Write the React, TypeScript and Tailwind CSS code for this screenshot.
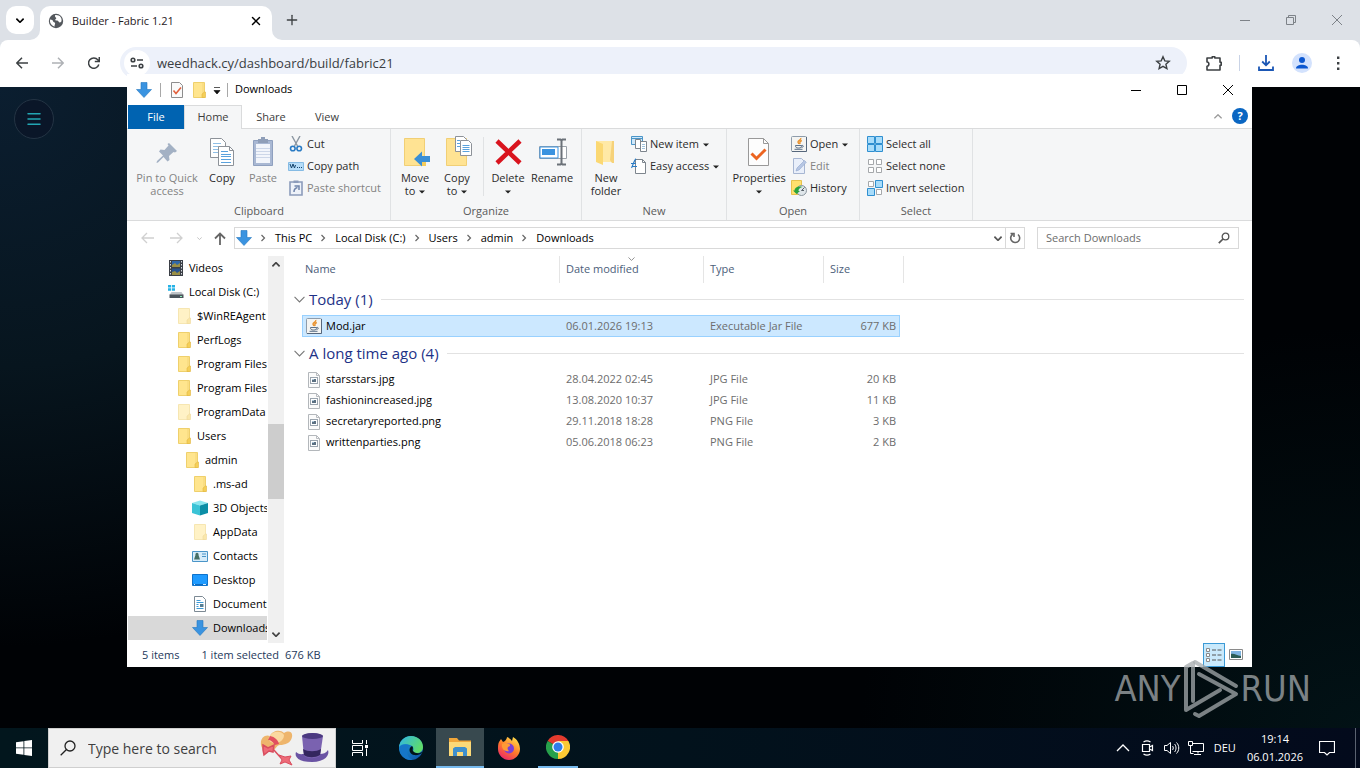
import { ReactNode } from "react";
import clsx from "clsx";
import { X, Plus, Menu } from "lucide-react";

type IconProps = { className?: string };

/* ---------- small shared icons ---------- */

const Chevron = ({
  className,
  up,
  weight = 1.2,
}: {
  className: string;
  up?: boolean;
  weight?: number;
}) => (
  <svg viewBox="0 0 10 6" className={className}>
    <path
      d={up ? "M.5 5.300 5 .8l4.500 4.500" : "M.5 .7 5 5.200 9.500 .7"}
      fill="none"
      stroke="currentColor"
      strokeWidth={weight}
    />
  </svg>
);

const DownArrow = ({ className = "size-4" }: IconProps) => (
  <svg viewBox="0 0 16 16" className={className}>
    <path
      d="M5 .5h6v7h4.500L8 15.500.5 7.500H5z"
      fill="#3a93e0"
      stroke="#2477c0"
      strokeWidth=".6"
    />
  </svg>
);

const Folder = ({ className = "size-4" }: IconProps) => (
  <svg viewBox="0 0 16 16" className={className}>
    <path d="M2.500 .5h11v15h-11z" fill="#ffe58e" stroke="#efd06c" />
    <path d="M12 1v10" stroke="#f5d679" />
    <path d="M13.500 10h1v5.500h-3.500v-3.500z" fill="#f5cf58" stroke="#e0b53f" strokeWidth=".6" />
  </svg>
);

const FolderLight = () => (
  <svg viewBox="0 0 16 16" className="size-4">
    <path d="M2.500 .5h11v15h-11z" fill="#fff2c6" stroke="#f6e6b2" />
    <path d="M13.500 10h1v5.500h-3.500v-3.500z" fill="#fae7ab" stroke="#efd99c" strokeWidth=".6" />
  </svg>
);

const JavaIcon = () => (
  <svg viewBox="0 0 16 16" className="size-4">
    <rect x=".5" y=".5" width="15" height="15" rx="1" fill="#f4f4f2" stroke="#8e9cab" />
    <path d="M1 15.500h14.500V1" fill="none" stroke="#56677c" />
    <path
      d="M9.800 2C10.500 4 6.500 4.600 7 6.200c.2.800 1 1 .8 2M10.800 4.500c-1.800.8-2.500 1.800-1.500 3.300"
      fill="none"
      stroke="#e8912d"
      strokeWidth="1.400"
    />
    <path
      d="M4.500 9.500h6c0 2-.8 2.500-3 2.500s-3-.5-3-2.500zM10.500 9.500c2.500-.5 2.500 1.500 0 2M3.500 13.300h8"
      fill="none"
      stroke="#5b7088"
    />
  </svg>
);

const ImageFile = () => (
  <svg viewBox="0 0 16 16" className="size-4">
    <path d="M2.500 .5h8l3 3v12h-11z" fill="#fbfbfb" stroke="#b3b7bb" />
    <path d="M10.500 .5v3h3" fill="none" stroke="#b9bcc0" />
    <rect x="4.500" y="5.500" width="7" height="6" fill="#fff" stroke="#9aa4ae" />
    <path d="M6 7h4v3H6z" fill="#5b7082" />
    <path d="M6 7h2v1H6z" fill="#a9c3d6" />
  </svg>
);

const Videos = () => (
  <svg viewBox="0 0 16 16" className="size-4">
    <path d="M1 0h14v16H1z" fill="#3b3f46" />
    <path d="M4 1h8v6H4z" fill="#2f67a8" />
    <path d="M4 8.500h8V15H4z" fill="#27538e" />
    <path d="m4 5 3-2 2 2 3-2v4H4zM4 12l3-1 2 2 3-2v4H4z" fill="#9a8f45" />
    <path d="M2.500 1v15M13.500 1v15" stroke="#d5dae0" strokeDasharray="1.500 1.500" />
  </svg>
);

const Disk = () => (
  <svg viewBox="0 0 16 16" className="size-4">
    <path d="M0 1h3v2.500H0zM3.800 1H7v2.500H3.800zM0 4.300h3v2.500H0zM3.800 4.300H7v2.500H3.800z" fill="#25b2e6" />
    <path d="m3.500 8-2 3h14l-2-3z" fill="#bfc4c9" />
    <path d="M1.500 10.500h14v3.500h-14z" fill="#4c545c" />
    <path d="M12 12h2v1h-2z" fill="#8df0b8" />
  </svg>
);

const Cube = () => (
  <svg viewBox="0 0 16 16" className="size-4">
    <path d="M8 .5 16 3 8 5.500 0 3z" fill="#8be6ef" />
    <path d="M0 3l8 2.500v10L0 13z" fill="#3ac3d6" />
    <path d="M16 3 8 5.500v10L16 13z" fill="#0b8ea6" />
  </svg>
);

const Contacts = () => (
  <svg viewBox="0 0 16 16" className="size-4">
    <path d="M.5 3.500h15v10H.5z" fill="#d6ecfa" stroke="#4a95c8" />
    <path d="M3.500 7a1.600 1.600 0 1 1 3 0L8 11.500H2z" fill="#466f66" />
    <path d="M10 6h4M10 8.500h4" stroke="#4a95c8" />
  </svg>
);

const DesktopIcon = () => (
  <svg viewBox="0 0 16 16" className="size-4">
    <path d="M.5 2.500h15v11H.5z" fill="#1f9bff" stroke="#0f73cc" />
    <path d="M1 12.500h14" stroke="#0f6cc0" />
    <path d="M2 12.500h1M11 12.500h3" stroke="#d6ecff" />
  </svg>
);

const Documents = () => (
  <svg viewBox="0 0 16 16" className="size-4">
    <path d="M2.500 .5h8l3 3v12h-11z" fill="#fff" stroke="#7d8a94" />
    <path d="M4.500 4.500h4M4.500 6.500h7M4.500 8.500h2M4.500 10.500h2M4.500 12.500h7" stroke="#3f9ad6" />
    <path d="M8 8h3.500v3H8z" fill="#567d92" />
  </svg>
);

/* ---------- browser ---------- */

const BrowserTabs = () => (
  <div className="flex h-10 shrink-0 items-start bg-[#dde1e7] pt-[6px] pl-[6px]">
    <button
      aria-label="Search tabs"
      className="mr-[6px] flex size-7 items-center justify-center rounded-[10px] bg-white"
    >
      <Chevron className="h-[5px] w-2" weight={2} />
    </button>
    <div className="relative flex h-[34px] w-[232px] items-center rounded-t-[10px] bg-white px-2 pb-1">
      <svg viewBox="0 0 10 10" className="absolute bottom-0 -left-2.5 size-2.5">
        <path d="M10 0v10H0A10 10 0 0 0 10 0z" fill="#fff" />
      </svg>
      <svg viewBox="0 0 10 10" className="absolute -right-2.5 bottom-0 size-2.5">
        <path d="M0 0v10h10A10 10 0 0 1 0 0z" fill="#fff" />
      </svg>
      <svg viewBox="0 0 16 16" className="mr-2 size-4">
        <circle cx="8" cy="8" r="7.200" fill="#54585d" />
        <path
          d="M2 6.500c2 .2 3 .8 3.200 2 .2 1 1.600.6 1.900 1.700.2 1-.9 1.600-.4 3.300C4 13 1.500 10.500 2 6.500zM7 2c.5 1-.4 1.800.5 2.300 1 .5 1 1.500 0 2-.6.4-.3 1.300.6 1.200 1.600-.2 2.200.6 2.900 1.400.8.9 1.800.6 2.400-.3C14.500 4.500 11.500 1.500 7 2z"
          fill="#fff"
        />
      </svg>
      <span className="flex-1 text-[11px] text-[#1f2023]">Builder - Fabric 1.21</span>
      <button aria-label="Close tab" className="mr-[1px]">
        <X className="size-3.5" strokeWidth={2.5} />
      </button>
    </div>
    <button aria-label="New tab" className="mt-[6px] ml-3">
      <Plus className="size-4 text-[#3c4043]" />
    </button>
    <div className="ml-auto flex text-[#7d8288]">
      <button aria-label="Minimize browser" className="flex h-7 w-[46px] items-center justify-center">
        <svg viewBox="0 0 10 10" className="size-2.5">
          <path d="M0 5.500h10" stroke="currentColor" />
        </svg>
      </button>
      <button aria-label="Restore browser" className="flex h-7 w-[46px] items-center justify-center">
        <svg viewBox="0 0 10 10" className="size-2.5">
          <path d="M.5 2.500h7v7h-7zM2.500 2.500v-2h7v7h-2" fill="none" stroke="currentColor" />
        </svg>
      </button>
      <button aria-label="Close browser" className="flex h-7 w-[46px] items-center justify-center">
        <svg viewBox="0 0 10 10" className="size-2.5">
          <path d="m0 0 10 10M10 0 0 10" stroke="currentColor" />
        </svg>
      </button>
    </div>
  </div>
);

const BrowserToolbar = () => (
  <div className="shrink-0 bg-[#dde1e7]">
    <div className="flex h-[47px] items-center rounded-t-[8px] bg-white pr-[14px] pb-px pl-4">
      <button aria-label="Back" className="mr-6">
        <svg viewBox="0 0 12 12" className="size-3 text-[#3c4043]">
          <path d="M12 6H1M6 .8.8 6 6 11.200" fill="none" stroke="currentColor" strokeWidth="1.500" />
        </svg>
      </button>
      <button aria-label="Forward" className="mr-6">
        <svg viewBox="0 0 12 12" className="size-3 text-[#aeb1b5]">
          <path d="M0 6h11M6 .8 11.200 6 6 11.200" fill="none" stroke="currentColor" strokeWidth="1.500" />
        </svg>
      </button>
      <button aria-label="Reload" className="mr-5">
        <svg viewBox="0 0 12 12" className="size-3 text-[#3c4043]">
          <path
            d="M10.800 7.500a5.200 5.200 0 1 1-.9-4.600L11 4.300M11.300 0v4.500H6.800"
            fill="none"
            stroke="currentColor"
            strokeWidth="1.500"
          />
        </svg>
      </button>
      <div className="flex h-8 flex-1 items-center rounded-full bg-[#edf1fa] pr-4 pl-1">
        <span className="mr-[7px] flex size-[26px] items-center justify-center rounded-full bg-white">
          <svg viewBox="0 0 14 12" className="h-3 w-3.5">
            <g fill="none" stroke="#3c4043" strokeWidth="1.600">
              <circle cx="3" cy="3" r="1.800" />
              <circle cx="11" cy="9" r="1.800" />
              <path d="M7 3h6M1 9h6" />
            </g>
          </svg>
        </span>
        <input
          aria-label="Address"
          className="h-6 min-w-0 flex-1 bg-transparent text-[13px] text-[#3a3d42] outline-none"
          defaultValue="weedhack.cy/dashboard/build/fabric21"
        />
        <button aria-label="Bookmark this page">
          <svg viewBox="0 0 16 16" className="size-4">
            <path
              d="m8 1.800 1.800 4.100 4.400.4-3.300 2.900 1 4.400L8 11.300l-3.900 2.300 1-4.400-3.300-2.900 4.400-.4z"
              fill="none"
              stroke="#3c4043"
              strokeWidth="1.400"
            />
          </svg>
        </button>
      </div>
      <button aria-label="Extensions" className="ml-[18px]">
        <svg viewBox="0 0 18 18" className="size-[18px]">
          <path
            d="M2 4h5.200V2.800h2.600V4h5.200v4.200h1.200v3H15V16H2v-3.800c2.500 0 2.500-4.200 0-4.200z"
            fill="none"
            stroke="#3c4043"
            strokeWidth="1.600"
            strokeLinejoin="round"
          />
        </svg>
      </button>
      <div className="mr-[18px] ml-4 h-4 w-px bg-[#c9d3e6]" />
      <button aria-label="Show downloads">
        <svg viewBox="0 0 16 16" className="size-4">
          <path d="M8 0v10M4.200 6.500 8 10.300l3.800-3.800M1 11.500V15h14v-3.500" fill="none" stroke="#1b57b5" strokeWidth="1.800" />
        </svg>
      </button>
      <button aria-label="Profile" className="ml-[18px]">
        <svg viewBox="0 0 20 20" className="size-5">
          <circle cx="10" cy="10" r="10" fill="#d3e2fd" />
          <circle cx="10" cy="7" r="3" fill="#0b57d0" />
          <path d="M4 15.500c0-5 12-5 12 0z" fill="#0b57d0" />
        </svg>
      </button>
      <button aria-label="Browser menu" className="ml-[18px]">
        <svg viewBox="0 0 16 16" className="size-4 text-[#3c4043]">
          <path d="M7 1.500h2.400v2.400H7zM7 7h2.400v2.400H7zM7 12.500h2.400v2.400H7z" fill="currentColor" />
        </svg>
      </button>
    </div>
  </div>
);

/* ---------- explorer ---------- */

const TitleBar = () => (
  <div className="flex h-[31px] shrink-0 items-center pl-[9px]">
    <DownArrow />
    <div className="mx-2 h-3.5 w-px bg-[#a8a8a8]" />
    <svg viewBox="0 0 16 16" className="mr-1.5 size-4">
      <path d="M2.500 .5h8l3 3v12h-11z" fill="#fafafa" stroke="#8d8d8d" />
      <path d="m4.500 8.500 2.500 3 5-6" fill="none" stroke="#e2603c" strokeWidth="1.600" />
    </svg>
    <Folder />
    <button aria-label="Customize toolbar" className="mx-1.5">
      <svg viewBox="0 0 8 8" className="mt-0.5 size-2">
        <path d="M1 .5h6M1 3.500h6L4 7z" fill="#111" stroke="#111" strokeWidth=".7" />
      </svg>
    </button>
    <div className="mr-[7px] h-3.5 w-px bg-[#a8a8a8]" />
    <span>Downloads</span>
    <div className="mr-px ml-auto flex">
      <button aria-label="Minimize" className="flex h-7 w-[46px] items-center justify-center">
        <svg viewBox="0 0 10 10" className="size-2.5">
          <path d="M0 5.500h10" stroke="#000" />
        </svg>
      </button>
      <button aria-label="Maximize" className="flex h-7 w-[46px] items-center justify-center">
        <svg viewBox="0 0 10 10" className="size-2.5">
          <path d="M.5 .5h9v9h-9z" fill="none" stroke="#000" />
        </svg>
      </button>
      <button aria-label="Close" className="flex h-7 w-[46px] items-center justify-center">
        <svg viewBox="0 0 10 10" className="size-2.5">
          <path d="m0 0 10 10M10 0 0 10" stroke="#000" />
        </svg>
      </button>
    </div>
  </div>
);

const RibbonTabs = () => (
  <div className="flex h-6 shrink-0 border-b border-[#dadbdc] text-[#3c3c3c]">
    <button className="ml-px h-6 w-14 bg-[#0063b1] text-white">File</button>
    <button className="h-6 w-[58px] border border-b-0 border-[#dadbdc] bg-[#f5f6f7]">Home</button>
    <button className="h-6 w-[58px]">Share</button>
    <button className="h-6 w-[54px]">View</button>
    <button aria-label="Collapse ribbon" className="mr-2.5 ml-auto">
      <Chevron up className="h-[5px] w-2 text-[#9a9a9a]" weight={1.6} />
    </button>
    <button
      aria-label="Help"
      className="mt-[3px] mr-1 size-4 rounded-full bg-[#0a66c2] text-[11px] leading-4 font-bold text-white"
    >
      ?
    </button>
  </div>
);

const Caret = ({ className = "ml-1" }: IconProps) => (
  <svg viewBox="0 0 6 4" className={clsx("inline-block h-1 w-1.5 align-middle", className)}>
    <path d="M0 .5h6L3 3.500z" fill="#222" />
  </svg>
);

const BigButton = ({
  icon,
  className,
  children,
}: {
  icon: ReactNode;
  className: string;
  children: ReactNode;
}) => (
  <button
    className={clsx(
      "flex shrink-0 flex-col items-center justify-start gap-[3px] pt-[7px] leading-[13px] whitespace-nowrap",
      className,
    )}
  >
    {icon}
    <span className="text-center">{children}</span>
  </button>
);

const SmallButton = ({
  icon,
  disabled,
  caret,
  children,
}: {
  icon: ReactNode;
  disabled?: boolean;
  caret?: boolean;
  children: ReactNode;
}) => (
  <button
    className={clsx(
      "flex h-[22px] items-center gap-[3px] whitespace-nowrap",
      disabled && "text-[#838383]",
    )}
  >
    {icon}
    <span>
      {children}
      {caret && <Caret />}
    </span>
  </button>
);

const RibbonGroup = ({
  label,
  className,
  children,
}: {
  label: string;
  className: string;
  children: ReactNode;
}) => (
  <div className={clsx("flex shrink-0 flex-col border-r border-[#e0e2e4]", className)}>
    <div className="flex flex-1">{children}</div>
    <div className="h-[18px] text-center leading-[18px] text-[#5a5a5a]">{label}</div>
  </div>
);

const Ribbon = () => (
  <div className="flex h-[92px] shrink-0 border-b border-[#dadbdc] bg-[#f5f6f7] pl-px text-[#2b2b2b]">
    <RibbonGroup label="Clipboard" className="w-[263px]">
      <BigButton
        className="w-[78px] text-[#838383]"
        icon={
          <svg viewBox="0 0 32 32" className="size-8">
            <path
              d="m18 7 8 8-2 1.500-1.500-.5-4.500 4 .5 4-2 1.500-4-4.500L7 26.500 5.500 27 6 25l6-5.500-4-4 1.500-2 4 .5 4-4.500L16.500 8z"
              fill="#a3b1c4"
            />
          </svg>
        }
      >
        Pin to Quick
        <br />
        access
      </BigButton>
      <BigButton
        className="w-8"
        icon={
          <svg viewBox="0 0 32 32" className="size-8">
            <path d="M4.500 2.500h11l4 4v15h-15z" fill="#fff" stroke="#8d9299" />
            <path d="M7 7.500h8M7 10.500h9M7 13.500h9M7 16.500h9" stroke="#8fbfe6" />
            <path d="M12.500 10.500h11l4 4v15h-15z" fill="#fff" stroke="#8d9299" />
            <path d="M23.500 10.500v4h4" fill="none" stroke="#8d9299" />
            <path d="M15 15.500h7M15 18.500h10M15 20.500h10M15 23.500h10M15 26.500h10" stroke="#5aa2dd" />
          </svg>
        }
      >
        Copy
      </BigButton>
      <BigButton
        className="w-[50px] text-[#838383]"
        icon={
          <svg viewBox="0 0 32 32" className="size-8">
            <path d="M6.500 4.500h19v25h-19z" fill="#a9b8d3" stroke="#8fa0bf" />
            <path d="M9 8h14v19H9z" fill="#f2f5fb" />
            <path d="M11 3h10v4H11zM14 1h4v3h-4z" fill="#8f9eb8" />
            <path d="M9 12.500h14M9 15.500h14M9 18.500h14M9 21.500h14" stroke="#ccd6e8" />
          </svg>
        }
      >
        Paste
      </BigButton>
      <div className="flex flex-col pt-1">
        <SmallButton
          icon={
            <svg viewBox="0 0 16 16" className="size-4">
              <path d="M4 0l5.500 10M12 0 6.500 10" stroke="#8b96a1" strokeWidth="1.400" />
              <circle cx="4.800" cy="12.500" r="2.300" fill="none" stroke="#2a7bc4" strokeWidth="1.600" />
              <circle cx="11.200" cy="12.500" r="2.300" fill="none" stroke="#2a7bc4" strokeWidth="1.600" />
            </svg>
          }
        >
          Cut
        </SmallButton>
        <SmallButton
          icon={
            <svg viewBox="0 0 16 16" className="size-4">
              <path d="M.5 4.500h15v8H.5z" fill="#b5dcf8" stroke="#85bbe4" />
              <path d="m2 6 1.500 4L5 6l1.500 4L7.500 7" fill="none" stroke="#14436b" />
              <path d="M9 9.500h1M11 9.500h1M13 9.500h1" stroke="#14436b" />
            </svg>
          }
        >
          Copy path
        </SmallButton>
        <SmallButton
          disabled
          icon={
            <svg viewBox="0 0 16 16" className="size-4">
              <path d="M2 2h12v13H2z" fill="#eef2f9" stroke="#8c9cbb" strokeWidth="1.600" />
              <path d="M5.500 .5h5v2.500h-5z" fill="#8c9cbb" />
              <path d="M6 12c0-3 1-4 3.500-4.500M6.500 6H11v4" fill="none" stroke="#6f84ab" strokeWidth="1.500" />
            </svg>
          }
        >
          Paste shortcut
        </SmallButton>
      </div>
    </RibbonGroup>

    <RibbonGroup label="Organize" className="w-[191px]">
      <BigButton
        className="w-12"
        icon={
          <svg viewBox="0 0 32 32" className="size-8">
            <path d="M5.500 2.500h20v27h-20z" fill="#ffe393" stroke="#f1cf75" />
            <path d="M22 25h5v5h-5z" fill="#f5cc5c" />
            <path d="M31 20v6h-8v4.500L15 23l8-7.500V20z" fill="#3a8fd6" />
          </svg>
        }
      >
        Move
        <br />
        to
        <Caret />
      </BigButton>
      <BigButton
        className="w-9"
        icon={
          <svg viewBox="0 0 32 32" className="size-8">
            <path d="M5.500 2.500h20v27h-20z" fill="#ffe393" stroke="#f1cf75" />
            <path d="M14.500 .5h8l3 3v12h-11z" fill="#fff" stroke="#8d9299" />
            <path d="M19.500 4.500h8l3 3v12h-11z" fill="#fff" stroke="#8d9299" />
            <path d="M21.500 9.500h7M21.500 11.500h7M21.500 13.500h7M21.500 15.500h7" stroke="#5aa2dd" />
            <path d="M16 4.500h3M16 7.500h3M16 10.500h3" stroke="#5aa2dd" />
          </svg>
        }
      >
        Copy
        <br />
        to
        <Caret />
      </BigButton>
      <div className="mt-2 mb-1.5 ml-2 w-px bg-[#e0e2e4]" />
      <BigButton
        className="w-12"
        icon={
          <svg viewBox="0 0 32 32" className="size-8">
            <path d="m5 5 23 22M28 5 5 27" stroke="#d9141e" strokeWidth="4.500" />
          </svg>
        }
      >
        Delete
        <br />
        <Caret className="" />
      </BigButton>
      <BigButton
        className="w-10"
        icon={
          <svg viewBox="0 0 32 32" className="size-8">
            <path d="M3.500 10.500h27v12h-27z" fill="#fff" stroke="#9aa1a8" />
            <path d="M4 11h18v11H4z" fill="none" stroke="#3a93e0" />
            <path d="M6 13h13v6H6z" fill="#3a93e0" />
            <path d="M21 3.500h3.500l1 1 1-1H30M25.500 4v24M21 28.500h3.500l1-1 1 1H30" fill="none" stroke="#6b7178" strokeWidth="2" />
          </svg>
        }
      >
        Rename
      </BigButton>
    </RibbonGroup>

    <RibbonGroup label="New" className="w-[145px]">
      <BigButton
        className="w-12"
        icon={
          <svg viewBox="0 0 32 32" className="size-8">
            <path d="M6 5h16v21H6z" fill="#ffe9a6" />
            <path d="M6 5l7 3v21l-7-3z" fill="#fbd873" />
            <path d="M22 5h2v22h-2l-2-3z" fill="#f6d27a" />
          </svg>
        }
      >
        New
        <br />
        folder
      </BigButton>
      <div className="flex flex-col pt-1 pl-px">
        <SmallButton
          caret
          icon={
            <svg viewBox="0 0 16 16" className="size-4">
              <path d="M.5 .5h11v8H.5z" fill="#cfe8fa" stroke="#4a95c8" />
              <path d="M1 2.500h10" stroke="#4a95c8" />
              <path d="M4.500 3.500h5v9h-5zM9.500 5.500h6v10h-6z" fill="#fff" stroke="#7d858d" />
              <path d="M11 8.500h3M11 10.500h3M11 12.500h3" stroke="#9fc3df" />
            </svg>
          }
        >
          New item
        </SmallButton>
        <SmallButton
          caret
          icon={
            <svg viewBox="0 0 16 16" className="size-4">
              <path d="M4.500 1.500h7l3 3v11h-10z" fill="#fff" stroke="#7d858d" />
              <path d="M11.500 1.500v3h3" fill="none" stroke="#7d858d" />
              <path d="M0 5.500h5M1 8.500h5M5 .8c-2.500 2-2.500 6-4.500 9" fill="none" stroke="#2a7bc4" strokeWidth="1.200" />
            </svg>
          }
        >
          Easy access
        </SmallButton>
      </div>
    </RibbonGroup>

    <RibbonGroup label="Open" className="w-[133px]">
      <BigButton
        className="w-16"
        icon={
          <svg viewBox="0 0 32 32" className="size-8">
            <path d="M5.500 2.500h15l5 5v22h-20z" fill="#fdfdfd" stroke="#999" />
            <path d="M20.500 2.500v5h5" fill="none" stroke="#999" />
            <path d="m8.500 17.500 5 5 9-9" fill="none" stroke="#ec6420" strokeWidth="3" />
          </svg>
        }
      >
        Properties
        <br />
        <Caret className="" />
      </BigButton>
      <div className="flex flex-col pt-1">
        <SmallButton caret icon={<JavaIcon />}>
          Open
        </SmallButton>
        <SmallButton
          disabled
          icon={
            <svg viewBox="0 0 16 16" className="size-4">
              <path d="M2.500 .5h8l3 3v12h-11z" fill="#e9effa" stroke="#a7b6d2" />
              <path d="m5 13 1-3 7.500-7.500 1.800 1.800L8 12z" fill="#b7c7e4" stroke="#91a6cd" strokeWidth=".6" />
            </svg>
          }
        >
          Edit
        </SmallButton>
        <SmallButton
          icon={
            <svg viewBox="0 0 16 16" className="size-4">
              <path d="M.5 .5h10v14H.5z" fill="#ffe06e" stroke="#e6c24d" />
              <circle cx="10.500" cy="10.500" r="5" fill="#dfe6ea" stroke="#8b969e" />
              <path d="m10.500 10.500 3-3M10.500 10.500h2.500" stroke="#58626a" />
              <path d="M2 10.500 5.500 14l3.500-3H7.500c0-2 1.500-3.500 4-4-4.500-1.500-8 .5-8 3.500z" fill="#2aa33c" />
            </svg>
          }
        >
          History
        </SmallButton>
      </div>
    </RibbonGroup>

    <RibbonGroup label="Select" className="w-[113px]">
      <div className="flex flex-col pt-1 pl-[7px]">
        <SmallButton
          icon={
            <svg viewBox="0 0 16 16" className="size-4">
              <path d="M.5 .5h7v7h-7zM8.500 .5h7v7h-7zM.5 8.500h7v7h-7zM8.500 8.500h7v7h-7z" fill="#a8dcfa" stroke="#2f8fd0" />
            </svg>
          }
        >
          Select all
        </SmallButton>
        <SmallButton
          icon={
            <svg viewBox="0 0 16 16" className="size-4">
              <path d="M1.500 1.500h5v5h-5zM9.500 1.500h5v5h-5zM1.500 9.500h5v5h-5zM9.500 9.500h5v5h-5z" fill="#fff" stroke="#a5a8ab" />
            </svg>
          }
        >
          Select none
        </SmallButton>
        <SmallButton
          icon={
            <svg viewBox="0 0 16 16" className="size-4">
              <path d="M1.500 1.500h5v5h-5zM9.500 9.500h5v5h-5z" fill="#fff" stroke="#a5a8ab" />
              <path d="M8.500 .5h7v7h-7zM.5 8.500h7v7h-7z" fill="#a8dcfa" stroke="#2f8fd0" />
            </svg>
          }
        >
          Invert selection
        </SmallButton>
      </div>
    </RibbonGroup>
  </div>
);

const crumbs = ["This PC", "Local Disk (C:)", "Users", "admin", "Downloads"];

const AddressBar = () => (
  <div className="flex h-[35px] shrink-0 items-center pr-[13px] pb-px pl-[14px]">
    <button aria-label="Back to previous folder" className="mr-4">
      <svg viewBox="0 0 13 12" className="h-3 w-[13px]">
        <path d="M13 6H1M6 1 1 6l5 5" fill="none" stroke="#d0d0d0" strokeWidth="1.300" />
      </svg>
    </button>
    <button aria-label="Forward to next folder" className="mr-3.5">
      <svg viewBox="0 0 13 12" className="h-3 w-[13px]">
        <path d="M0 6h12M7 1l5 5-5 5" fill="none" stroke="#d0d0d0" strokeWidth="1.300" />
      </svg>
    </button>
    <button aria-label="Recent locations" className="mr-3">
      <Chevron className="h-[3px] w-[5px] text-[#c4c4c4]" weight={2} />
    </button>
    <button aria-label="Up one level" className="mr-2">
      <svg viewBox="0 0 12 13" className="h-[13px] w-3">
        <path d="M6 13V1.500M1 6.500l5-5 5 5" fill="none" stroke="#666" strokeWidth="1.800" />
      </svg>
    </button>
    <div className="flex h-[22px] flex-1 items-center border border-[#d9d9d9] pl-px">
      <DownArrow />
      {crumbs.map((crumb) => (
        <div key={crumb} className="flex items-center">
          <svg viewBox="0 0 4 8" className="mr-[9px] ml-2 h-2 w-1.5">
            <path d="m.5 1 3 3-3 3" fill="none" stroke="#666" strokeWidth="1.200" />
          </svg>
          <a href="#" className="whitespace-nowrap">
            {crumb}
          </a>
        </div>
      ))}
      <button aria-label="Previous locations" className="mr-[3px] ml-auto">
        <Chevron className="h-[5px] w-2 text-[#555]" weight={2.2} />
      </button>
      <button
        aria-label="Refresh"
        className="flex h-full w-[19px] items-center justify-center border-l border-[#d9d9d9]"
      >
        <svg viewBox="0 0 12 12" className="size-3">
          <path d="M9 2.500a4.500 4.500 0 1 1-5.200-.3M1.500 1.500h3.500v3.500" fill="none" stroke="#666" strokeWidth="1.600" />
        </svg>
      </button>
    </div>
    <div className="ml-3 flex h-[22px] w-[202px] items-center border border-[#d9d9d9] pr-2 pl-2">
      <input
        aria-label="Search Downloads"
        placeholder="Search Downloads"
        className="min-w-0 flex-1 outline-none placeholder:text-[#6d6d6d]"
      />
      <svg viewBox="0 0 12 12" className="size-3">
        <circle cx="7.500" cy="4.500" r="3.300" fill="none" stroke="#555" strokeWidth="1.300" />
        <path d="M5 7 .8 11.200" stroke="#555" strokeWidth="1.700" />
      </svg>
    </div>
  </div>
);

const tree = [
  { name: "Videos", icon: <Videos />, pad: "pl-10" },
  { name: "Local Disk (C:)", icon: <Disk />, pad: "pl-10" },
  { name: "$WinREAgent", icon: <FolderLight />, pad: "pl-12" },
  { name: "PerfLogs", icon: <Folder />, pad: "pl-12" },
  { name: "Program Files", icon: <Folder />, pad: "pl-12" },
  { name: "Program Files (x86)", icon: <Folder />, pad: "pl-12" },
  { name: "ProgramData", icon: <FolderLight />, pad: "pl-12" },
  { name: "Users", icon: <Folder />, pad: "pl-12" },
  { name: "admin", icon: <Folder />, pad: "pl-14" },
  { name: ".ms-ad", icon: <Folder />, pad: "pl-16" },
  { name: "3D Objects", icon: <Cube />, pad: "pl-16" },
  { name: "AppData", icon: <FolderLight />, pad: "pl-16" },
  { name: "Contacts", icon: <Contacts />, pad: "pl-16" },
  { name: "Desktop", icon: <DesktopIcon />, pad: "pl-16" },
  { name: "Documents", icon: <Documents />, pad: "pl-16" },
  { name: "Downloads", icon: <DownArrow />, pad: "pl-16", active: true },
];

const NavPane = () => (
  <div className="flex w-[157px] shrink-0">
    <ul className="ml-px flex-1 overflow-hidden pr-px">
      {tree.map(({ name, icon, pad, active }) => (
        <li key={name}>
          <a
            href="#"
            className={clsx(
              "flex h-6 items-center gap-[5px] overflow-hidden whitespace-nowrap",
              pad,
              active && "bg-[#d9d9d9]",
            )}
          >
            <span className="shrink-0">{icon}</span>
            {name}
          </a>
        </li>
      ))}
    </ul>
    <div className="flex w-4 flex-col items-center bg-[#f0f0f0]">
      <button aria-label="Scroll up" className="flex h-[17px] items-center">
        <Chevron up className="h-[5px] w-2 text-[#444]" weight={2.2} />
      </button>
      <div className="flex-[151]" />
      <div className="w-full flex-[75] bg-[#cdcdcd]" />
      <div className="flex-[127]" />
      <button aria-label="Scroll down" className="flex h-[17px] items-center">
        <Chevron className="h-[5px] w-2 text-[#444]" weight={2.2} />
      </button>
    </div>
  </div>
);

type FileEntry = {
  name: string;
  date: string;
  type: string;
  size: string;
  selected?: boolean;
};

const groups: { title: string; files: FileEntry[] }[] = [
  {
    title: "Today (1)",
    files: [
      {
        name: "Mod.jar",
        date: "06.01.2026 19:13",
        type: "Executable Jar File",
        size: "677 KB",
        selected: true,
      },
    ],
  },
  {
    title: "A long time ago (4)",
    files: [
      { name: "starsstars.jpg", date: "28.04.2022 02:45", type: "JPG File", size: "20 KB" },
      { name: "fashionincreased.jpg", date: "13.08.2020 10:37", type: "JPG File", size: "11 KB" },
      { name: "secretaryreported.png", date: "29.11.2018 18:28", type: "PNG File", size: "3 KB" },
      { name: "writtenparties.png", date: "05.06.2018 06:23", type: "PNG File", size: "2 KB" },
    ],
  },
];

const FileRow = ({ file }: { file: FileEntry }) => {
  const cell = file.selected ? "border-y border-[#99d1ff] bg-[#cce8ff]" : "";
  return (
    <tr className={clsx("text-[#6d6d6d]", file.selected ? "h-[22px]" : "h-[21px]")}>
      <td />
      <td className={clsx("p-0 text-black", cell, file.selected && "border-l")}>
        <div className={clsx("flex items-center gap-1", file.selected ? "pl-[3px]" : "pl-1")}>
          {file.selected ? <JavaIcon /> : <ImageFile />}
          {file.name}
        </div>
      </td>
      <td className={clsx("p-0 pl-[7px]", cell)}>{file.date}</td>
      <td className={clsx("p-0 pl-[7px]", cell)}>{file.type}</td>
      <td className={clsx("p-0 text-right", cell, file.selected ? "border-r pr-[3px]" : "pr-1")}>
        {file.size}
      </td>
      <td />
      <td />
    </tr>
  );
};

const FileList = () => (
  <div className="flex-1 overflow-hidden pr-2 pl-[7px]">
    <table className="w-full table-fixed border-separate border-spacing-0 text-left">
      <colgroup>
        <col className="w-[11px]" />
        <col className="w-[257px]" />
        <col className="w-[144px]" />
        <col className="w-[120px]" />
        <col className="w-[77px]" />
        <col className="w-[3px]" />
        <col />
      </colgroup>
      <thead>
        <tr className="h-[27px] text-[#4c607a]">
          <td />
          <th className="pl-[3px] font-normal">Name</th>
          <th className="relative border-l border-[#e5e5e5] pl-[6px] font-normal">
            Date modified
            <Chevron className="absolute top-px left-[68px] h-1 w-[7px] text-[#777]" />
          </th>
          <th className="border-l border-[#e5e5e5] pl-[6px] font-normal">Type</th>
          <th className="border-l border-[#e5e5e5] pl-[6px] font-normal">Size</th>
          <td className="p-0" />
          <td className="border-l border-[#e5e5e5] p-0" />
        </tr>
      </thead>
      {groups.map((group) => (
        <tbody key={group.title}>
          <tr className="h-8">
            <td colSpan={7} className="p-0">
              <button className="flex w-full items-center text-[15px] leading-[18px] text-[#1e3287]">
                <Chevron className="mr-1 ml-[3px] h-[7px] w-[11px] text-[#777]" weight={1} />
                {group.title}
                <span className="ml-2 h-px flex-1 bg-[#e2e2e2]" />
              </button>
            </td>
          </tr>
          {group.files.map((file) => (
            <FileRow key={file.name} file={file} />
          ))}
        </tbody>
      ))}
    </table>
  </div>
);

const StatusBar = () => (
  <div className="flex h-6 shrink-0 items-center pr-[9px] pl-[15px] text-[#1e395b]">
    <span>5 items</span>
    <span className="ml-[22px]">1 item selected</span>
    <span className="ml-1.5">676 KB</span>
    <button
      aria-label="Details view"
      className="ml-auto flex h-6 w-[22px] items-center justify-center border border-[#3c9ad6] bg-[#c9e9fb]"
    >
      <svg viewBox="0 0 16 16" className="size-4">
        <path d="M.5 1.500h3v3h-3zM.5 6.500h3v3h-3zM.5 11.500h3v3h-3z" fill="#fff" stroke="#8a8a8a" />
        <path d="M6 3h4M11.500 3h4M6 8h4M11.500 8h4M6 13h4M11.500 13h4" stroke="#555" />
      </svg>
    </button>
    <button aria-label="Large icons view" className="ml-1">
      <svg viewBox="0 0 14 12" className="h-3 w-3.5">
        <path d="M.5 .5h13v10H.5z" fill="#fff" stroke="#8a8a8a" />
        <path d="M2 2h10v7H2z" fill="#7fb4e0" />
        <path d="M2 5c3-1 6 2 10 2v2H2z" fill="#2c5d55" />
      </svg>
    </button>
  </div>
);

const Explorer = () => (
  <div className="absolute top-[74px] right-[108px] bottom-[101px] left-[127px] flex flex-col overflow-hidden bg-white text-[11px] text-black">
    <TitleBar />
    <RibbonTabs />
    <Ribbon />
    <AddressBar />
    <div className="flex min-h-0 flex-1">
      <NavPane />
      <FileList />
    </div>
    <StatusBar />
  </div>
);

/* ---------- desktop ---------- */

const Watermark = () => (
  <div className="pointer-events-none absolute right-[49px] bottom-[48px] flex h-[62px] items-center font-['DejaVu_Sans_Condensed','DejaVu_Sans',sans-serif] text-[36px] leading-none text-[#a4a9ac]/75">
    <span>ANY</span>
    <svg viewBox="0 0 60 62" className="h-[62px] w-[60px]">
      <g fill="none" stroke="currentColor" strokeWidth="4" strokeLinejoin="round" strokeLinecap="round">
        <path d="M12 43V5L5 9v43l34-20" />
        <path d="m14 4 41 24M18 16l37 20-37 22-4-2" />
      </g>
    </svg>
    <span>RUN</span>
  </div>
);

const TaskbarSearch = () => (
  <label className="flex w-[288px] shrink-0 items-center border border-[#cfcfcf] bg-[#f0f0f0] pr-1 pl-[11px]">
    <svg viewBox="0 0 16 16" className="mr-3 size-4">
      <circle cx="10" cy="6" r="5" fill="none" stroke="#222" strokeWidth="1.300" />
      <path d="M6.500 9.500.7 15.300" stroke="#222" strokeWidth="1.300" />
    </svg>
    <input
      aria-label="Type here to search"
      placeholder="Type here to search"
      className="min-w-0 flex-1 bg-transparent text-[14px] outline-none placeholder:text-[#3f3f3f]"
    />
    <svg viewBox="0 0 72 36" className="h-9 w-[72px]">
      {/* straw hat with a ribbon */}
      <path d="M2 15C1 8 6 4 11 6c2-5 10-7 14-3 5-3 9-1 8 4-1 6-7 8-12 8-4 0-5 7-10 7-4 0-8-2-9-7z" fill="#eeb56c" />
      <path d="M10 7c3-6 12-7 15-2 0 5-5 9-11 8-3-1-5-3-4-6z" fill="#fbd9a0" />
      <path d="M11 6c5 1 8 4 9 8l-4 1c-2-3-4-5-7-5z" fill="#e2505f" />
      <path d="m4 15 5 3 6-3-1 7-4-1-5 4-1-5zM14 19l8 9" fill="#ee6b78" stroke="#d94d5e" strokeWidth="1.500" />
      <path d="m20 25 6 2 6-1-2 4 3 5-7-3-5 2 2-4z" fill="#ee6b78" stroke="#d94d5e" />
      {/* top hat */}
      <path d="M37 22c3 3 6 2 8 2h16c3 0 6-1 8-4 2 5-3 12-16 12s-18-5-16-10z" fill="#6a53a3" />
      <path d="M43 6c5-4 16-4 21 0l-3 20c-5 3-12 3-16 0z" fill="#7a62b0" />
      <path d="M44 19c5 3 13 3 18 0l-1 6c-5 3-12 3-16 0z" fill="#34265e" />
      <ellipse cx="53.500" cy="6" rx="10.500" ry="3" fill="#4b3980" />
    </svg>
  </label>
);

const EdgeIcon = () => (
  <svg viewBox="0 0 24 24" className="size-6">
    <defs>
      <linearGradient id="edge-top" x1="0" y1="0" x2="1" y2=".5">
        <stop offset="0" stopColor="#2fb5e9" />
        <stop offset="1" stopColor="#5fdc6a" />
      </linearGradient>
      <linearGradient id="edge-body" x1="0" y1="0" x2="1" y2="1">
        <stop offset="0" stopColor="#1fa0e0" />
        <stop offset="1" stopColor="#0c4fa3" />
      </linearGradient>
    </defs>
    <circle cx="12" cy="12" r="12" fill="url(#edge-body)" />
    <path d="M0 11C1 4 6 0 12 0c7 0 12 5 12 11 0 4-3 6-6 6-3 0-4-1-4-2 1-1 1-5-3-6C6 7 2 8 0 11z" fill="url(#edge-top)" />
    <path d="M14 15c-1-2 1-3-1-5-4 2-3 8 2 9 3 .6 6-.5 8-2 1-1 0-1-1-.600-3 1.500-6 1-8-1.400z" fill="#021419" />
    <path d="M11 9.500c-5 3-4 12 3 14.300C5 25 0 18 .5 11 3 8 8 8 11 9.500z" fill="#1676c8" />
  </svg>
);

const ExplorerIcon = () => (
  <svg viewBox="0 0 24 24" className="size-6">
    <path d="M1 3h8l2 2.500h12V20H1z" fill="#f0a63a" />
    <path d="M1 7h22v14H1z" fill="#fcd978" />
    <path d="M5 21v-7.500l2-1.500h10l2 1.500V21h-4v-4H9v4z" fill="#3f8fcb" />
  </svg>
);

const FirefoxIcon = () => (
  <svg viewBox="0 0 24 24" className="size-6">
    <defs>
      <linearGradient id="fox" x1=".8" y1="0" x2=".2" y2="1">
        <stop offset="0" stopColor="#ffe14a" />
        <stop offset=".5" stopColor="#ff7a2a" />
        <stop offset="1" stopColor="#e8206e" />
      </linearGradient>
    </defs>
    <path d="M2 6l2-3 2 3 2-1c1-1 2-3 2-4 3 1 4 3 5 4l1-4c4 2 7 7 7 12 0 6-5 11-11 11S1 19 1 13c0-3 0-5 1-7z" fill="url(#fox)" />
    <circle cx="12" cy="12.500" r="5" fill="#7a3fd6" />
    <path d="M5 8c3-2 5 0 7 0 2 1 1 2-1 3-1 2 0 3 1 4-4 1-8-2-7-7z" fill="#ff9a35" />
  </svg>
);

const ChromeIcon = () => (
  <svg viewBox="0 0 24 24" className="size-6">
    <path d="M12 12 1.600 6A12 12 0 0 1 22.400 6z" fill="#e33b2e" />
    <path d="M12 12 22.400 6A12 12 0 0 1 12 24z" fill="#fcc934" />
    <path d="M12 12v12A12 12 0 0 1 1.600 6z" fill="#27a04b" />
    <path d="M12 6h10.400L17.200 15 12 24l5-9z" fill="#fcc934" />
    <circle cx="12" cy="12" r="5.800" fill="#fff" />
    <circle cx="12" cy="12" r="4.500" fill="#2f7de9" />
  </svg>
);

const Taskbar = () => (
  <footer className="flex h-10 shrink-0 bg-linear-to-r from-[#02161d] via-[#02121c] to-[#030a1c] text-white">
    <button aria-label="Start" className="flex w-12 shrink-0 items-center justify-center">
      <svg viewBox="0 0 16 16" className="size-4">
        <path d="M0 2.200 7.500 1.200v6.300H0zM8.300 1.100 16 0v7.500H8.300zM0 8.300h7.500v6.400L0 13.700zM8.300 8.300H16V16l-7.700-1.100z" fill="#fff" />
      </svg>
    </button>
    <TaskbarSearch />
    <button aria-label="Task view" className="flex w-12 items-center justify-center">
      <svg viewBox="0 0 16 16" className="size-4">
        <path d="M.5 0v3.500h10V0M.5 16v-3.500h10V16M.5 5.500h10v5H.5zM14.500 0v4M14.500 8.500V16" fill="none" stroke="#fff" />
        <path d="M13 5h3v3h-3z" fill="#fff" />
      </svg>
    </button>
    <button aria-label="Edge" className="ml-0.5 flex w-[50px] items-center justify-center">
      <EdgeIcon />
    </button>
    <button
      aria-label="File Explorer"
      className="flex w-12 items-center justify-center border-b-2 border-[#76b9ed] bg-[#38494f]"
    >
      <ExplorerIcon />
    </button>
    <button aria-label="Firefox" className="flex w-[50px] items-center justify-center">
      <FirefoxIcon />
    </button>
    <button
      aria-label="Chrome"
      className="ml-1 flex w-10 items-center justify-center border-b-2 border-[#76b9ed]"
    >
      <ChromeIcon />
    </button>
    <div className="ml-auto flex items-center text-[11px]">
      <button aria-label="Show hidden icons" className="mr-2.5">
        <svg viewBox="0 0 14 8" className="h-2 w-3.5">
          <path d="m1 7 6-6 6 6" fill="none" stroke="#fff" strokeWidth="1.300" />
        </svg>
      </button>
      <button aria-label="Meet now" className="mr-2">
        <svg viewBox="0 0 16 16" className="size-4">
          <path d="M2.500 4.500h7v7h-7zM9.500 7l3-1.500v5l-3-1.500M3.500 2c2-1.300 5-1.300 7 0M3.500 14c2 1.300 5 1.300 7 0" fill="none" stroke="#fff" strokeWidth="1.200" />
        </svg>
      </button>
      <button aria-label="Volume" className="mr-2">
        <svg viewBox="0 0 16 16" className="size-4">
          <path d="M.5 5.500H3L6.500 2.500v11L3 10.500H.5zM8.500 6c1 1 1 3 0 4M10.500 4c2 2 2 6 0 8M12.500 2.500c3 3 3 8 0 11" fill="none" stroke="#fff" />
        </svg>
      </button>
      <button aria-label="Network" className="mr-2.5">
        <svg viewBox="0 0 16 16" className="size-4">
          <path d="M4.500 3.500h11v8h-11M.5 1.500h4v4h-4zM2.500 5.500v8h3M10 11.500v2M6 14.500h7" fill="none" stroke="#fff" />
        </svg>
      </button>
      <button className="mr-[11px]">DEU</button>
      <div className="mr-4 text-center leading-[18px]">
        <p>19:14</p>
        <p>06.01.2026</p>
      </div>
      <button aria-label="Notifications" className="mr-5">
        <svg viewBox="0 0 16 16" className="size-4">
          <path d="M.5 1.500h15v11h-5L8 15l-2.500-2.500h-5z" fill="none" stroke="#fff" strokeWidth="1.200" />
        </svg>
      </button>
      <div className="mr-1 h-10 w-px bg-[#5a6270]" />
    </div>
  </footer>
);

export default function App() {
  return (
    <div className="relative flex h-screen flex-col overflow-hidden font-['Open_Sans','Noto_Sans',sans-serif]">
      <BrowserTabs />
      <BrowserToolbar />
      <main className="flex-1 bg-[#000205] bg-[radial-gradient(ellipse_600px_560px_at_0_0,#0b1e30,#07151e_50%,transparent),radial-gradient(ellipse_500px_400px_at_100%_100%,#021216,transparent)] px-3.5 pt-3">
        <button
          aria-label="Open menu"
          className="flex size-10 items-center justify-center rounded-full border border-[#243444] bg-[#0a1628]"
        >
          <Menu className="size-[18px] text-[#22a6b3]" />
        </button>
      </main>
      <Taskbar />
      <Explorer />
      <Watermark />
    </div>
  );
}
